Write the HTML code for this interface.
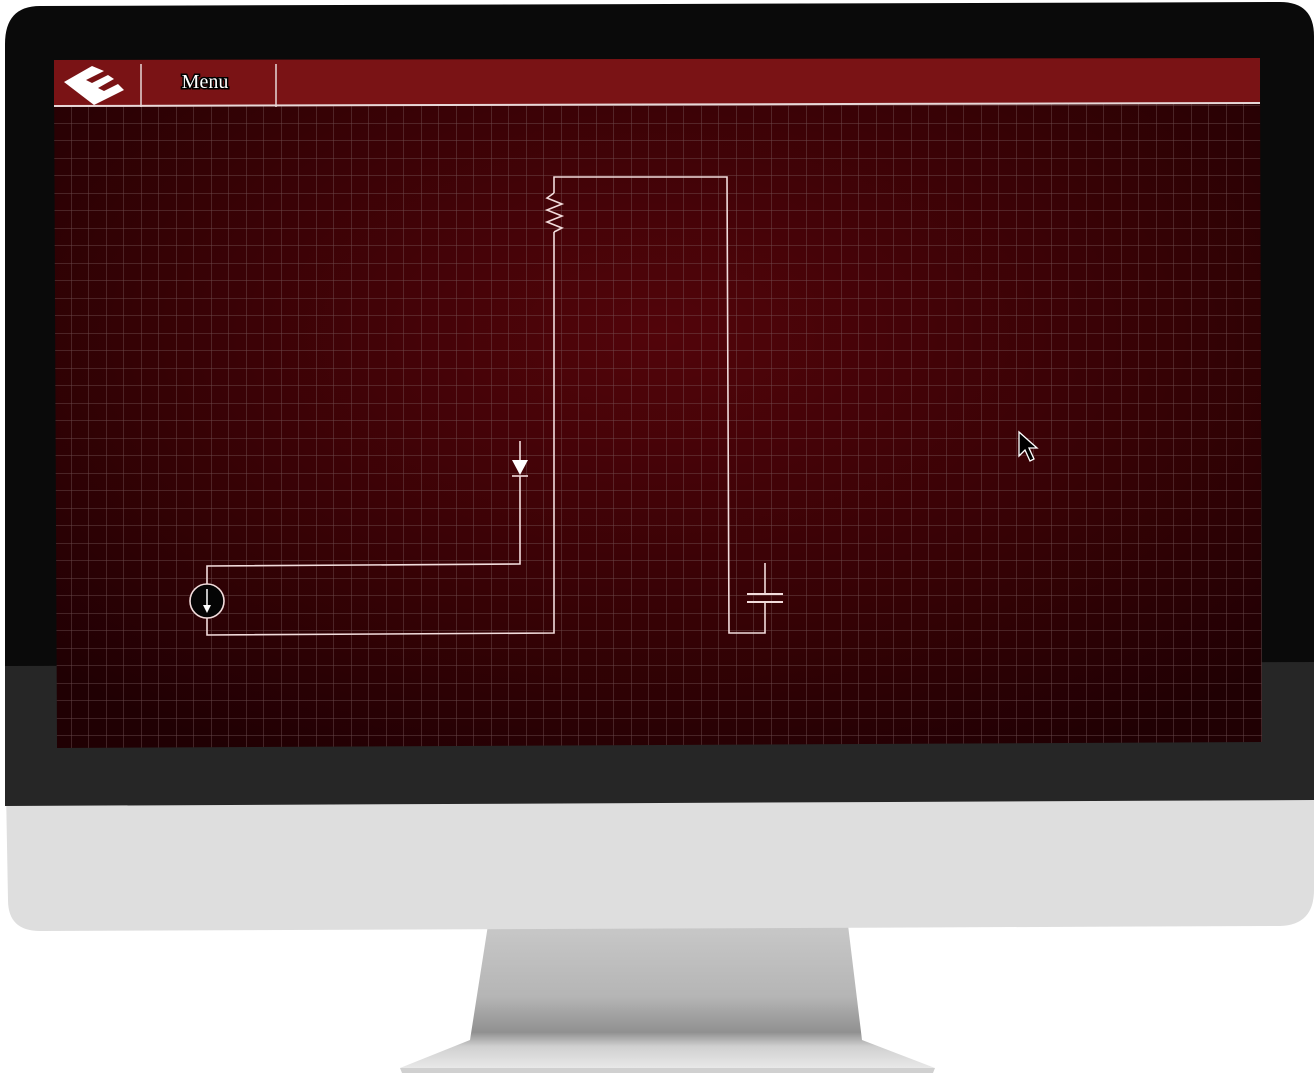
<!DOCTYPE html>
<html><head><meta charset="utf-8"><style>
html,body{margin:0;padding:0;background:#fff;width:1316px;height:1076px;overflow:hidden}
svg{display:block}
</style></head><body>
<svg width="1316" height="1076" viewBox="0 0 1316 1076" xmlns="http://www.w3.org/2000/svg">
<defs>
<radialGradient id="scr" cx="0.5" cy="0.4" r="0.7">
<stop offset="0" stop-color="#52040a"/>
<stop offset="0.6" stop-color="#360205"/>
<stop offset="1" stop-color="#200003"/>
</radialGradient>
<pattern id="grid" width="17.5" height="17.5" patternUnits="userSpaceOnUse" x="54" y="106">
<path d="M17.5 0V17.5M0 17.5H17.5" stroke="#806466" stroke-width="1" fill="none" opacity="0.7"/>
</pattern>
<linearGradient id="stand" x1="0" y1="0" x2="0" y2="1">
<stop offset="0" stop-color="#c8c8c8"/>
<stop offset="0.5" stop-color="#b5b5b5"/>
<stop offset="0.75" stop-color="#909090"/>
<stop offset="0.85" stop-color="#d0d0d0"/>
<stop offset="1" stop-color="#e8e8e8"/>
</linearGradient>
</defs>
<path d="M488 925 L848 925 L862 1040 L935 1068 L400 1068 L470 1040 Z" fill="url(#stand)"/>
<path d="M400 1068 L935 1068 L933 1073 L402 1073 Z" fill="#d0d0d0"/>
<path d="M6 790 L1314 785 L1314 890 Q1314 925 1280 926 L40 931 Q8 931 8 900 Z" fill="#dedede"/>
<path d="M5 660 L1314 655 L1314 800 L5 806 Z" fill="#262626"/>
<path d="M40 6 L1280 2 Q1314 2 1314 36 L1314 662 L5 666 L5 44 Q5 6 40 6 Z" fill="#0a0a0a"/>
<path d="M54 60 L1260 58 L1262 742 L57 748 Z" fill="url(#scr)"/>
<path d="M54 106 L1260 104 L1262 742 L57 748 Z" fill="url(#grid)"/>
<path d="M54 60 L1260 58 L1260 104 L54 107 Z" fill="#7a1315"/>
<path d="M54 106 L1260 103" stroke="#e8d8d8" stroke-width="2"/>
<line x1="141" y1="64" x2="141" y2="107" stroke="#e8d8d8" stroke-width="1.5"/>
<line x1="276" y1="64" x2="276" y2="107" stroke="#e8d8d8" stroke-width="1.5"/>
<path d="M64 82 L92 66 L104 71 L86 80 L92 83 L108 75 L114 79 L98 88 L104 91 L118 84 L124 90 L94 105 Z" fill="#fff"/>
<text x="205" y="88" text-anchor="middle" font-family="Liberation Serif, serif" font-size="20" fill="#fff" stroke="#000" stroke-width="3" paint-order="stroke">Menu</text>
<g stroke="#f2dcdc" stroke-width="1.6" fill="none">
<path d="M554 232 L554 633 L207 635 L207 618"/>
<path d="M207 585 L207 566 L520 564 L520 476"/>
<path d="M520 441 L520 460"/>
<path d="M554 193 L554 177 L727 177 L729 633 L765 633 L765 603"/>
<path d="M554 193 L547 198 L562 204 L547 210 L562 216 L547 222 L562 228 L554 232"/>
<path d="M765 563 L765 595"/>
<path d="M747 594 L783 594 M747 602 L783 602" stroke-width="2"/>
<path d="M512 476 L528 476"/>
</g>
<path d="M512 460 L528 460 L520 475 Z" fill="#fff"/>
<circle cx="207" cy="601" r="17" fill="#050505" stroke="#f2dcdc" stroke-width="1.6"/>
<path d="M207 589 L207 608" stroke="#fff" stroke-width="1.5"/>
<path d="M203 605 L211 605 L207 613 Z" fill="#fff"/>
<path d="M1019 432 L1019 456 L1025 450 L1030 461 L1034 459 L1029 448 L1037 448 Z" fill="#000" stroke="#fff" stroke-width="1.3"/>
</svg>
</body></html>
